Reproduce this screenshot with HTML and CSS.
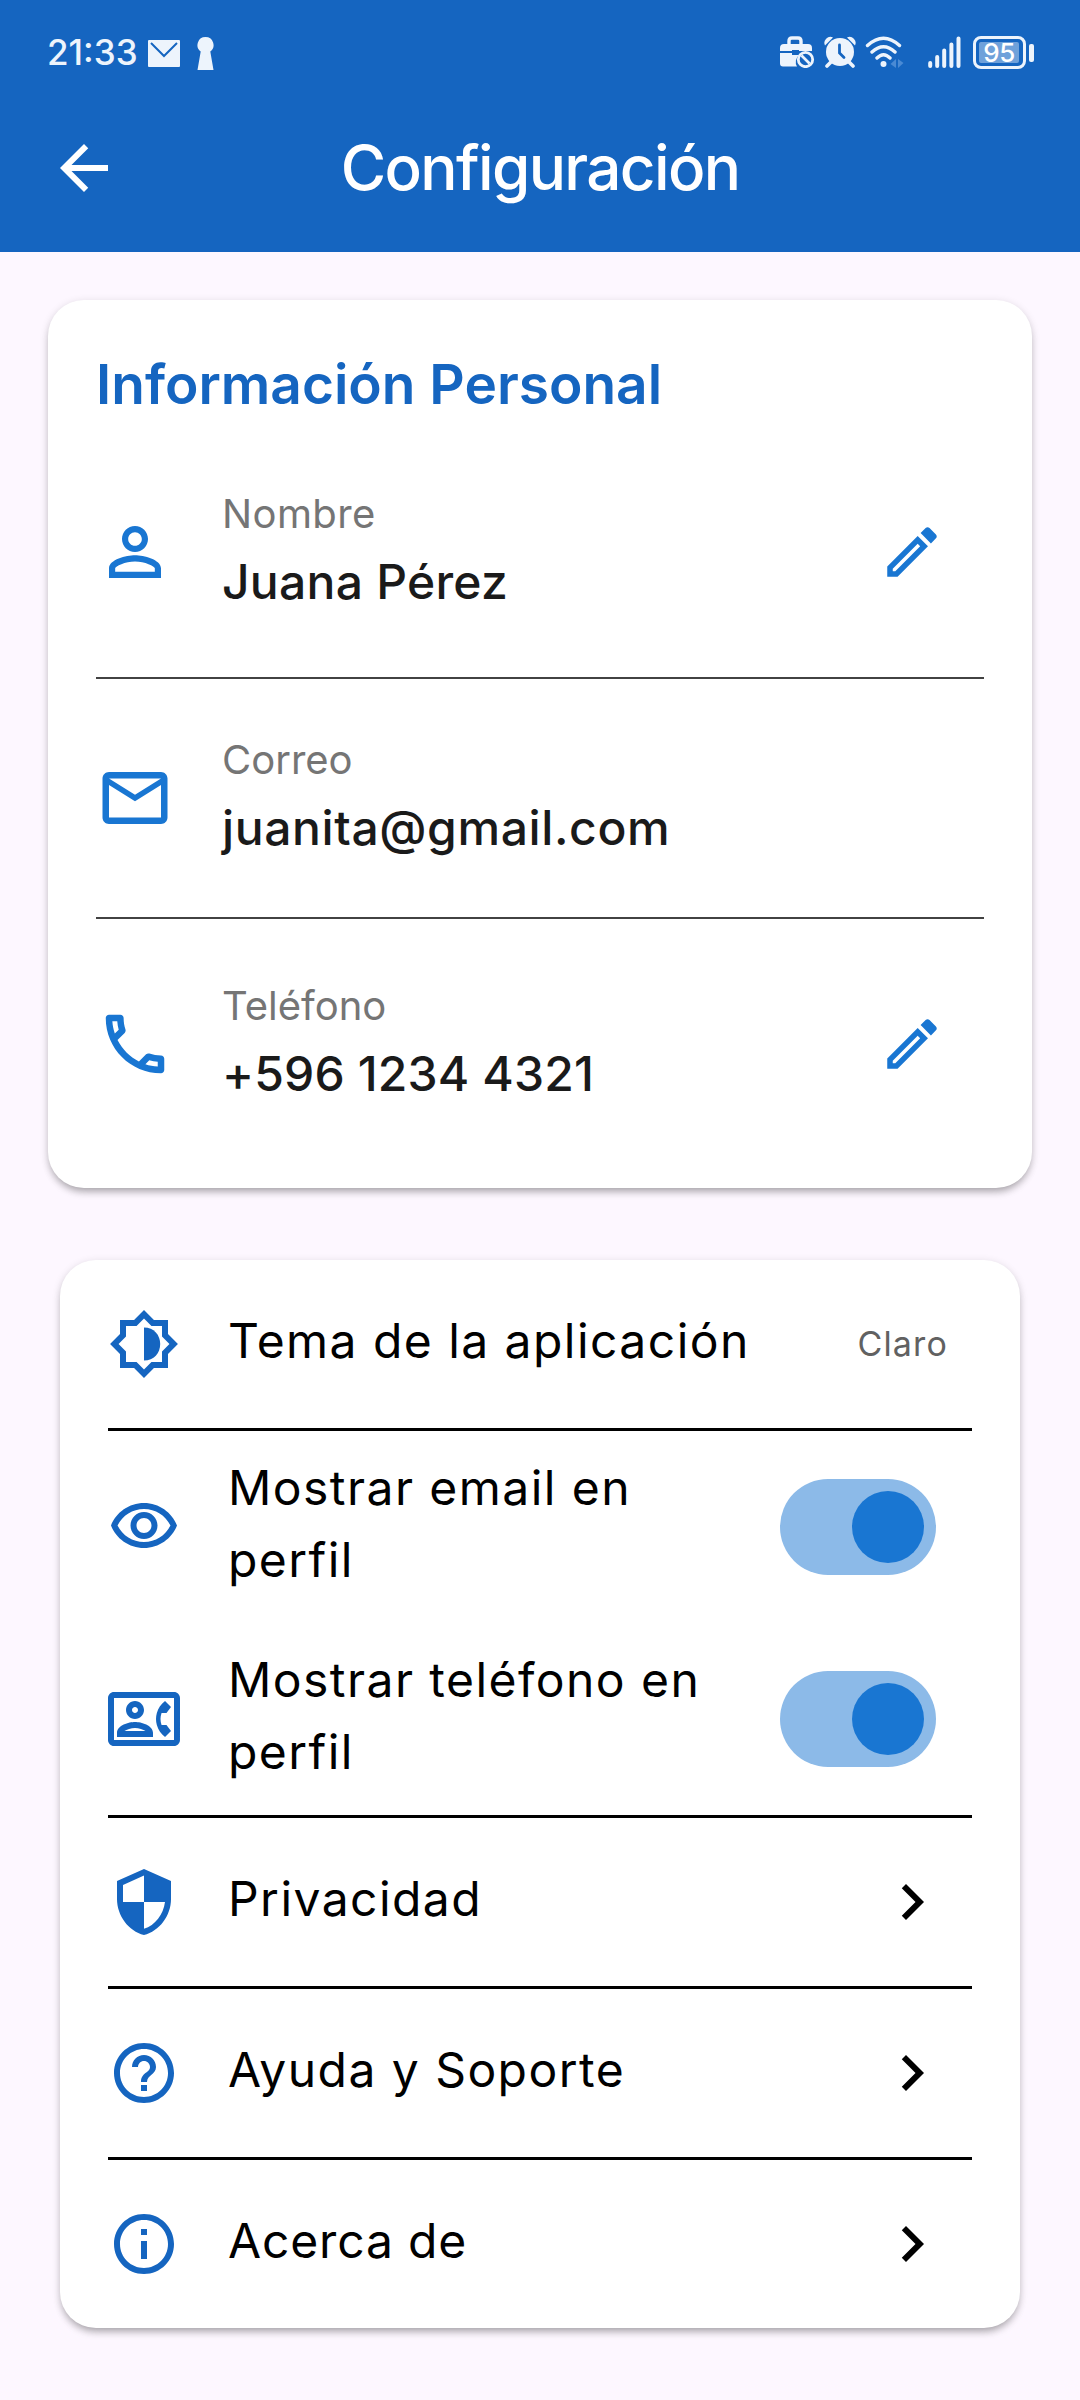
FILE: index.html
```
<!DOCTYPE html>
<html lang="es">
<head>
<meta charset="utf-8">
<title>Configuración</title>
<link rel="stylesheet" href="styles.css">
</head>
<body>
<header class="header">
  <div class="status">
    <span class="clock">21:33</span>
    <svg class="st-mail" viewBox="0 0 32 27"><rect width="32" height="27" rx="1" fill="#edf4fc"/><path d="M3 3l13 13L29 3" fill="none" stroke="#1565c0" stroke-width="2"/></svg>
    <svg class="st-key" viewBox="0 0 17 33"><path d="M8.500 0a8 8 0 0 1 4.800 14.400L16.500 33H.5L3.700 14.400A8 8 0 0 1 8.500 0z" fill="#edf4fc"/></svg>
    <svg class="st-case" viewBox="0 0 36 32"><path d="M10 9V5q0-3 3-3h6q3 0 3 3v4" fill="none" stroke="#edf4fc" stroke-width="3.400"/><path d="M1 15v-3q0-4 4-4h24q4 0 4 4v3H20v-1h-7v1zM1 17h12v2h7a9 9 0 0 0-2 11.500H4q-3 0-3-3z" fill="#edf4fc"/><circle cx="26.500" cy="23.500" r="7.200" fill="#1565c0" stroke="#edf4fc" stroke-width="2.800"/><path d="M22.500 19.500l8 8" stroke="#edf4fc" stroke-width="2.600"/></svg>
    <svg class="st-alarm" viewBox="0 0 32 32"><g fill="#edf4fc"><circle cx="16" cy="16" r="14"/><path d="M1 9.500A6 6 0 0 1 9 1.500zM31 9.500A6 6 0 0 0 23 1.500z"/></g><path d="M7 26l-4 4M25 26l4 4" stroke="#edf4fc" stroke-width="3.600" stroke-linecap="round"/><path d="M15.500 9v8l4.500 4.500" fill="none" stroke="#1565c0" stroke-width="2.800" stroke-linecap="round"/></svg>
    <svg class="st-wifi" viewBox="0 0 40 33"><g fill="none" stroke="#edf4fc" stroke-width="3.400" stroke-linecap="round"><path d="M2.500 9.500q16-14.500 32 0M7 16q11.500-10.500 23 0M12 22q6.500-6.500 13 0"/></g><circle cx="18.500" cy="28" r="3" fill="#edf4fc"/><path d="M31 23v9l-5.500-4zM33 23v9l5.500-5z" fill="#4a8ad4"/></svg>
    <svg class="st-signal" viewBox="0 0 34 32"><path d="M2.200 27v3M9.200 21v9M16.200 14.500V30M23.400 8.500V30M30.500 2.500V30" stroke="#edf4fc" stroke-width="4" stroke-linecap="round"/></svg>
    <span class="battery"><span class="battery-level">95</span></span>
    <span class="battery-tip"></span>
  </div>
  <div class="appbar">
    <svg class="back" viewBox="0 0 24 24"><path d="M20 11H7.830l5.590-5.590L12 4l-8 8 8 8 1.410-1.410L7.830 13H20v-2z"/></svg>
    <h1 class="title">Configuración</h1>
  </div>
</header>

<main>
  <section class="card profile">
    <h2 class="section-title">Información Personal</h2>
    <div class="field">
      <svg class="icon" viewBox="0 0 24 24"><path d="M12 5.900c1.160 0 2.100.94 2.100 2.100s-.94 2.100-2.100 2.100S9.900 9.160 9.900 8s.94-2.100 2.100-2.100m0 9c2.970 0 6.100 1.460 6.100 2.100v1.100H5.900V17c0-.64 3.130-2.100 6.100-2.100M12 4C9.790 4 8 5.790 8 8s1.790 4 4 4 4-1.790 4-4-1.790-4-4-4zm0 9c-2.670 0-8 1.340-8 4v3h16v-3c0-2.660-5.330-4-8-4z"/></svg>
      <div class="field-text">
        <div class="field-label name-label">Nombre</div>
        <div class="field-value name">Juana Pérez</div>
      </div>
      <svg class="edit" viewBox="0 0 24 24"><path d="M14.060 9.020l.92.92L5.920 19H5v-.92l9.060-9.060M17.660 3c-.25 0-.51.1-.7.290l-1.830 1.830 3.750 3.750 1.830-1.830c.39-.39.39-1.020 0-1.410l-2.340-2.340c-.2-.2-.45-.29-.71-.29zm-3.600 3.190L3 17.250V21h3.750L17.810 9.940l-3.750-3.750z"/></svg>
    </div>
    <div class="field middle">
      <svg class="icon" viewBox="0 0 24 24"><path d="M22 6c0-1.100-.9-2-2-2H4c-1.100 0-2 .9-2 2v12c0 1.100.9 2 2 2h16c1.100 0 2-.9 2-2V6zm-2 0l-8 5-8-5h16zm0 12H4V8l8 5 8-5v10z"/></svg>
      <div class="field-text">
        <div class="field-label">Correo</div>
        <div class="field-value mail">juanita@gmail.com</div>
      </div>
    </div>
    <div class="field">
      <svg class="icon" viewBox="0 0 24 24"><path d="M6.540 5c.06.89.21 1.760.45 2.590l-1.200 1.200c-.41-1.200-.67-2.470-.76-3.790h1.510m9.860 12.020c.85.24 1.720.39 2.600.45v1.490c-1.320-.09-2.590-.35-3.800-.75l1.200-1.190M7.500 3H4c-.55 0-1 .45-1 1 0 9.390 7.610 17 17 17 .55 0 1-.45 1-1v-3.490c0-.55-.45-1-1-1-1.240 0-2.450-.2-3.570-.57-.1-.04-.21-.05-.31-.05-.26 0-.51.1-.71.290l-2.200 2.200c-2.830-1.450-5.150-3.760-6.590-6.590l2.200-2.200c.28-.28.36-.67.25-1.020C8.700 6.450 8.500 5.250 8.500 4c0-.55-.45-1-1-1z"/></svg>
      <div class="field-text">
        <div class="field-label">Teléfono</div>
        <div class="field-value phone">+596 1234 4321</div>
      </div>
      <svg class="edit" viewBox="0 0 24 24"><path d="M14.060 9.020l.92.92L5.920 19H5v-.92l9.060-9.060M17.660 3c-.25 0-.51.1-.7.290l-1.830 1.830 3.750 3.750 1.830-1.830c.39-.39.39-1.020 0-1.410l-2.340-2.340c-.2-.2-.45-.29-.71-.29zm-3.600 3.190L3 17.250V21h3.750L17.810 9.940l-3.750-3.750z"/></svg>
    </div>
  </section>

  <section class="card settings">
    <div class="row">
      <svg class="row-icon" viewBox="0 0 24 24"><path d="M20 8.690V4h-4.690L12 .69 8.690 4H4v4.690L.69 12 4 15.310V20h4.690L12 23.310 15.310 20H20v-4.690L23.310 12 20 8.690zm-2 5.790V18h-3.520L12 20.480 9.520 18H6v-3.520L3.520 12 6 9.520V6h3.520L12 3.520 14.480 6H18v3.520L20.480 12 18 14.480z"/><path d="M12 6.500v11c3.300 0 5.400-2.500 5.400-5.500S15.300 6.500 12 6.500z"/></svg>
      <div class="row-label">Tema de la aplicación</div>
      <div class="row-value">Claro</div>
    </div>
    <div class="row tall">
      <svg class="row-icon" viewBox="0 0 24 24"><path d="M12 6c3.790 0 7.170 2.130 8.820 5.500C19.170 14.870 15.790 17 12 17s-7.170-2.130-8.820-5.500C4.830 8.130 8.210 6 12 6m0-2C7 4 2.730 7.110 1 11.500 2.730 15.890 7 19 12 19s9.270-3.110 11-7.500C21.270 7.110 17 4 12 4zm0 5c1.380 0 2.500 1.120 2.500 2.500S13.380 14 12 14s-2.500-1.120-2.500-2.500S10.620 9 12 9m0-2c-2.480 0-4.500 2.020-4.500 4.500S9.520 16 12 16s4.500-2.020 4.500-4.500S14.480 7 12 7z"/></svg>
      <div class="row-label">Mostrar email en perfil</div>
      <div class="switch"><div class="thumb"></div></div>
    </div>
    <div class="row tall last-toggle">
      <svg class="row-icon" viewBox="0 0 24 24"><path d="M22 3H2C.9 3 0 3.900 0 5v14c0 1.100.9 2 2 2h20c1.100 0 1.990-.9 1.990-2L24 5c0-1.100-.9-2-2-2zm0 16H2V5h20v14zm-2.990-1.010L21 16l-1.510-2h-1.640c-.22-.63-.35-1.300-.35-2s.13-1.370.35-2h1.640L21 8l-1.990-1.990c-1.310.98-2.280 2.380-2.730 3.990-.18.64-.28 1.310-.28 2s.1 1.360.28 2c.45 1.610 1.420 3.010 2.730 3.990zM9 12c1.650 0 3-1.350 3-3s-1.350-3-3-3-3 1.350-3 3 1.350 3 3 3zm0-4c.55 0 1 .45 1 1s-.45 1-1 1-1-.45-1-1 .45-1 1-1zm6 8.590c0-2.500-3.970-3.580-6-3.580s-6 1.080-6 3.580V18h12v-1.410zM5.480 16c.74-.5 2.220-1 3.520-1 1.310 0 2.770.49 3.520 1H5.480z"/></svg>
      <div class="row-label">Mostrar teléfono en perfil</div>
      <div class="switch"><div class="thumb"></div></div>
    </div>
    <div class="row">
      <svg class="row-icon" viewBox="0 0 24 24"><path d="M12 1L3 5v6c0 5.550 3.840 10.740 9 12 5.160-1.260 9-6.450 9-12V5l-9-4zm0 10.990h7c-.53 4.120-3.280 7.790-7 8.940V12H5V6.300l7-3.110v8.800z"/></svg>
      <div class="row-label">Privacidad</div>
      <svg class="chevron" viewBox="0 0 24 24"><path d="M10 6L8.590 7.410 13.170 12l-4.580 4.590L10 18l6-6z"/></svg>
    </div>
    <div class="row">
      <svg class="row-icon" viewBox="0 0 24 24"><path d="M11 18h2v-2h-2v2zm1-16C6.480 2 2 6.480 2 12s4.480 10 10 10 10-4.480 10-10S17.520 2 12 2zm0 18c-4.410 0-8-3.590-8-8s3.590-8 8-8 8 3.590 8 8-3.590 8-8 8zm0-14c-2.210 0-4 1.790-4 4h2c0-1.100.9-2 2-2s2 .9 2 2c0 2-3 1.750-3 5h2c0-2.250 3-2.500 3-5 0-2.210-1.790-4-4-4z"/></svg>
      <div class="row-label">Ayuda y Soporte</div>
      <svg class="chevron" viewBox="0 0 24 24"><path d="M10 6L8.590 7.410 13.170 12l-4.580 4.590L10 18l6-6z"/></svg>
    </div>
    <div class="row">
      <svg class="row-icon" viewBox="0 0 24 24"><path d="M11 7h2v2h-2zm0 4h2v6h-2zm1-9C6.480 2 2 6.480 2 12s4.480 10 10 10 10-4.480 10-10S17.520 2 12 2zm0 18c-4.410 0-8-3.590-8-8s3.590-8 8-8 8 3.590 8 8-3.590 8-8 8z"/></svg>
      <div class="row-label about">Acerca de</div>
      <svg class="chevron" viewBox="0 0 24 24"><path d="M10 6L8.590 7.410 13.170 12l-4.580 4.590L10 18l6-6z"/></svg>
    </div>
  </section>
</main>
</body>
</html>
```
FILE: styles.css
```
* { box-sizing: border-box; }
body {
  margin: 0;
  width: 1080px;
  min-height: 2400px;
  background: #fdf7ff;
  font-family: Inter, "Noto Sans", sans-serif;
  color: #000;
}
svg { display: block; flex: none; }
h1, h2 { margin: 0; }

.header { height: 252px; background: #1565c0; color: #fff; }
.status { display: flex; align-items: flex-start; height: 84px; padding: 36px 46px 0 47px; }
.clock { width: 101px; font-size: 35px; line-height: 33px; font-weight: 500; color: #edf4fc; }
.st-mail { width: 32px; height: 27px; margin-top: 4px; }
.st-key { width: 17px; height: 33px; margin: 1px 0 0 17px; }
.st-case { width: 36px; height: 32px; margin-left: auto; }
.st-alarm { width: 32px; height: 32px; margin-left: 9px; }
.st-wifi { width: 40px; height: 33px; margin-left: 9px; }
.st-signal { width: 34px; height: 32px; margin-left: 23px; }
.battery {
  width: 53px; height: 33px; margin-left: 11px; padding: 3px;
  border: 3px solid #edf4fc; border-radius: 8px;
}
.battery-level {
  display: block; width: 40px; height: 21px; border-radius: 2px;
  background: #6fa1da; color: #fff;
  font-size: 26px; font-weight: 500; line-height: 21px; text-align: center; letter-spacing: -0.4px;
}
.battery-tip { width: 5px; height: 18px; margin: 8px 0 0 3px; border-radius: 2px; background: #edf4fc; }

.appbar { display: grid; grid-template-columns: 72px 1fr 72px; align-items: center; height: 168px; padding: 0 48px; }
.back { width: 72px; height: 72px; fill: #fff; }
.title { font-size: 62px; line-height: 74px; font-weight: 500; letter-spacing: -1.67px; text-align: center; }

.card {
  background: #fff;
  border-radius: 36px;
  box-shadow: 0 6px 9px -3px rgba(0, 0, 0, .28), 0 2px 9px rgba(0, 0, 0, .14);
}
.profile { margin: 48px 48px 72px; padding: 48px 48px 19px; }
.section-title { margin-bottom: 7px; font-size: 55px; line-height: 72px; font-weight: 600; color: #1565c0; }
.field { display: flex; align-items: center; gap: 48px; height: 250px; padding-right: 39px; }
.field.middle { height: 242px; border: solid #424242; border-width: 2px 0; }
.icon { width: 78px; height: 78px; fill: #1976d2; }
.edit { width: 66px; height: 66px; fill: #1976d2; }
.field-text { flex: 1; padding-bottom: 4px; }
.field-label { font-size: 40px; line-height: 62px; color: #757575; }
.name-label { letter-spacing: .4px; }
.field-value { font-size: 48px; line-height: 73px; font-weight: 500; color: #1a1a1a; }
.name { letter-spacing: .26px; }
.mail { letter-spacing: .61px; }
.phone { letter-spacing: .15px; }

.settings { margin: 0 60px; padding: 0 48px; }
.row { display: flex; align-items: center; gap: 48px; height: 168px; padding-right: 24px; }
.row + .row { height: 171px; border-top: 3px solid #000; }
.row + .row.tall { height: 195px; }
.row + .row.last-toggle { height: 192px; border-top: 0; }
.row.tall { padding-right: 36px; }
.row-icon { width: 72px; height: 72px; fill: #1565c0; }
.row-label { flex: 1; padding-bottom: 6px; font-size: 48px; line-height: 72px; letter-spacing: 1.45px; }
.row-label.about { letter-spacing: .85px; }
.row-value { padding-bottom: 2px; font-size: 34px; letter-spacing: 1.15px; color: #616161; }
.switch { display: flex; width: 156px; height: 96px; padding: 12px; border-radius: 48px; background: #8cbae8; }
.thumb { width: 72px; height: 72px; margin-left: auto; border-radius: 50%; background: #1976d2; }
.chevron { width: 72px; height: 72px; }
```
